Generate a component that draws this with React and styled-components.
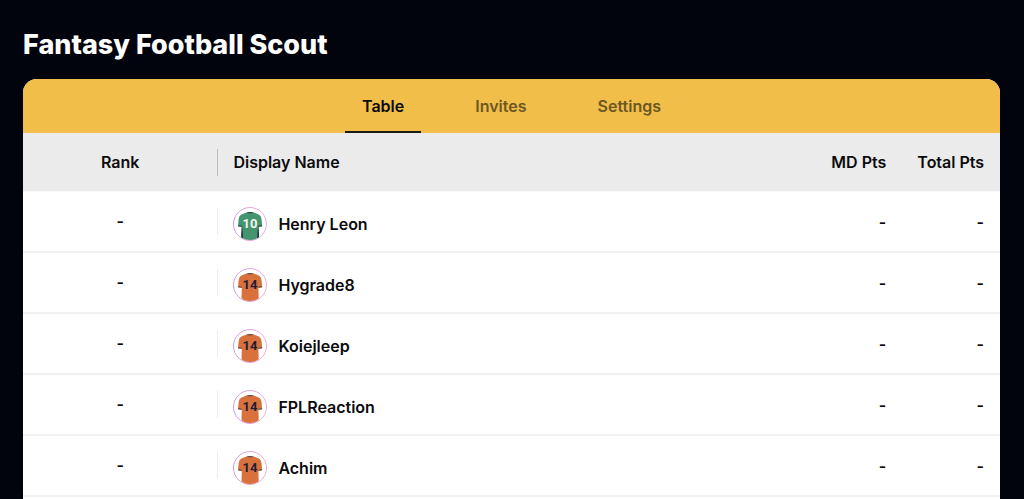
import React, { useState } from "react";
import styled, { createGlobalStyle } from "styled-components";

const GlobalStyle = createGlobalStyle`
  *, *::before, *::after { box-sizing: border-box; }
  body {
    margin: 0;
    background: #01040d;
    color: #0b0b0d;
    font-family: Inter, "Liberation Sans", sans-serif;
    overflow: hidden;
  }
`;

const Page = styled.main`
  padding: 27px 24px 0 23px;
`;

const Title = styled.h1`
  margin: 0 0 16px;
  color: #fff;
  font-size: 27px;
  font-weight: 800;
  line-height: 36px;
`;

const Card = styled.section`
  overflow: hidden;
  padding-bottom: 16px;
  border-radius: 14px 14px 0 0;
  background: #fff;
`;

const TabBar = styled.div`
  display: flex;
  justify-content: center;
  gap: 37px;
  background: #f1be4a;
`;

const Tab = styled.button`
  height: 54px;
  padding: 2px 17px 0;
  border: 0;
  border-bottom: 2px solid ${({ $active }) => ($active ? "#1c1a16" : "transparent")};
  background: none;
  color: ${({ $active }) => ($active ? "#0b0b0d" : "#6d5722")};
  font: inherit;
  font-size: 16px;
  font-weight: 600;
  cursor: pointer;
`;

const Table = styled.table`
  width: 100%;
  table-layout: fixed;
  border-collapse: separate;
  border-spacing: 0;
  font-size: 16px;
  font-weight: 600;
`;

const RankColumn = styled.col`
  width: 20%;
`;

const PointsColumn = styled.col`
  width: 10%;
`;

const HeadCell = styled.th`
  height: 59px;
  padding: 0 16px 0 15px;
  border-bottom: 1px solid #f8f8f8;
  background: #ebebeb;
  font-weight: 600;
  text-align: ${({ $align }) => $align || "left"};
  white-space: nowrap;
`;

const HeadRankCell = styled(HeadCell)`
  padding: 0;
`;

const Cell = styled.td`
  height: 61px;
  padding: 0 16px 0 15px;
  border-bottom: 2px solid #f1f1f1;
  text-align: ${({ $align }) => $align || "left"};
`;

const RankCell = styled(Cell)`
  padding: 0;
`;

const RankValue = styled.div`
  border-right: 1px solid ${({ $strong }) => ($strong ? "#bdbdbd" : "#efeee6")};
  line-height: 27px;
  text-align: center;
`;

const Player = styled.div`
  display: flex;
  align-items: center;
  gap: 11px;
  padding-top: 4px;
`;

const Avatar = styled.svg`
  display: block;
  flex: none;
  width: 34px;
  height: 34px;
`;

const KITS = {
  green: { body: "#459470", trim: "#263c43", ink: "#f1f5f1", number: "10", sides: true },
  orange: { body: "#d8713b", trim: "#51434b", ink: "#201d35", number: "14", sides: false },
};

const PLAYERS = [
  { name: "Henry Leon", kit: "green" },
  { name: "Hygrade8", kit: "orange" },
  { name: "Koiejleep", kit: "orange" },
  { name: "FPLReaction", kit: "orange" },
  { name: "Achim", kit: "orange" },
];

function Jersey({ kit }) {
  const { body, trim, ink, number, sides } = KITS[kit];
  const id = React.useId();
  return (
    <Avatar viewBox="0 0 34 34" aria-hidden="true">
      <defs>
        <linearGradient id={`${id}-ring`} x1="0" x2="1">
          <stop offset="0" stopColor="#cf9be3" />
          <stop offset="1" stopColor="#efadd8" />
        </linearGradient>
        <clipPath id={`${id}-clip`}>
          <circle cx="17" cy="17" r="16" />
        </clipPath>
      </defs>
      <circle cx="17" cy="17" r="16.5" fill="#fff" stroke={`url(#${id}-ring)`} />
      <g clipPath={`url(#${id}-clip)`}>
        <path
          d="M13.4 5.4 H20.8 L26.2 7.8 Q28.2 9 28.6 12.5 L29.2 19.3 L25.4 19.8 L25.8 34 H8.4 L8.8 19.8 L5 19.3 L5.6 12.5 Q6 9 8 7.8Z"
          fill={body}
        />
        {sides && (
          <path d="M8.8 17.5 L7.8 34 H10.2 L9.8 25Z M25.4 17.5 L24.4 25 L24 34 H26.4Z" fill={trim} />
        )}
        <path d="M5.1 18.3 L8.8 18.8 V19.8 L5 19.3Z M29.1 18.3 L25.4 18.8 V19.8 L29.2 19.3Z" fill={trim} />
        <path d="M13.4 5.7 Q17 4.4 20.8 5.7 Q17 7 13.4 5.7Z" fill={trim} />
        <text
          x="17"
          y="21"
          fill={ink}
          fontFamily='Roboto, "Liberation Sans", sans-serif'
          fontSize="13"
          fontWeight="700"
          textAnchor="middle"
        >
          {number}
        </text>
      </g>
    </Avatar>
  );
}

export default function App() {
  const [active, setActive] = useState("Table");
  return (
    <>
      <GlobalStyle />
      <Page>
        <Title>Fantasy Football Scout</Title>
        <Card>
          <TabBar role="tablist">
            {["Table", "Invites", "Settings"].map((label) => (
              <Tab
                key={label}
                type="button"
                role="tab"
                aria-selected={active === label}
                $active={active === label}
                onClick={() => setActive(label)}
              >
                {label}
              </Tab>
            ))}
          </TabBar>
          <Table>
            <colgroup>
              <RankColumn />
              <col />
              <PointsColumn />
              <PointsColumn />
            </colgroup>
            <thead>
              <tr>
                <HeadRankCell scope="col">
                  <RankValue $strong>Rank</RankValue>
                </HeadRankCell>
                <HeadCell scope="col">Display Name</HeadCell>
                <HeadCell scope="col" $align="right">MD Pts</HeadCell>
                <HeadCell scope="col" $align="right">Total Pts</HeadCell>
              </tr>
            </thead>
            <tbody>
              {PLAYERS.map(({ name, kit }) => (
                <tr key={name}>
                  <RankCell>
                    <RankValue>-</RankValue>
                  </RankCell>
                  <Cell>
                    <Player>
                      <Jersey kit={kit} />
                      {name}
                    </Player>
                  </Cell>
                  <Cell $align="right">-</Cell>
                  <Cell $align="right">-</Cell>
                </tr>
              ))}
            </tbody>
          </Table>
        </Card>
      </Page>
    </>
  );
}
